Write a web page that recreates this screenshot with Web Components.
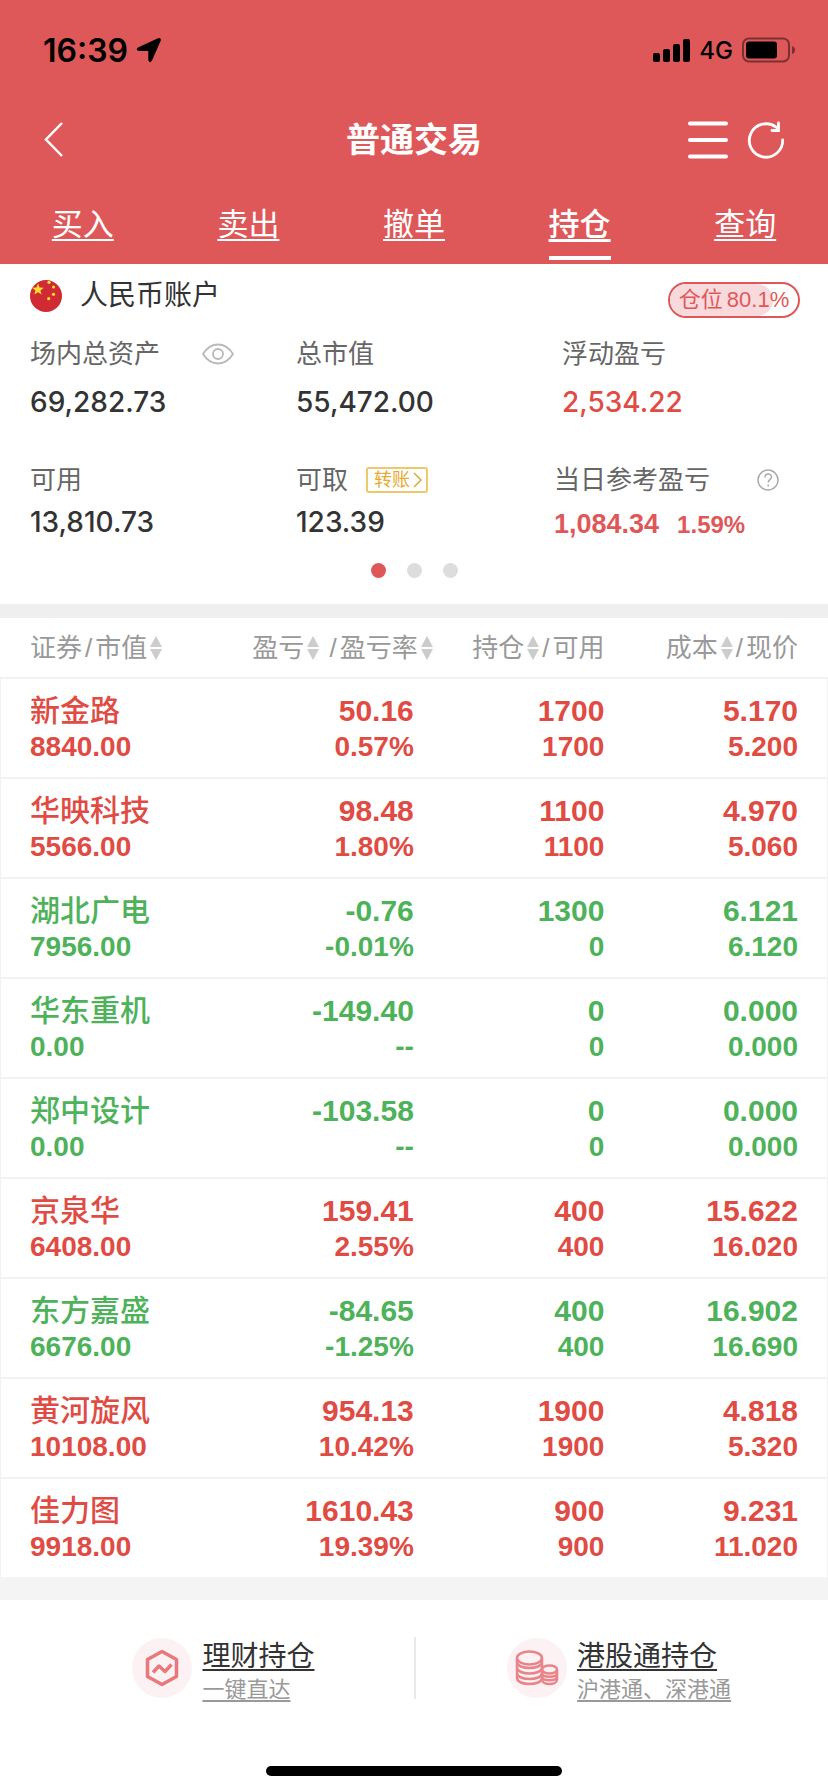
<!DOCTYPE html>
<html lang="zh-CN">
<head>
<meta charset="utf-8">
<meta name="viewport" content="width=device-width, initial-scale=1">
<title>普通交易</title>
<style>
    body {
        margin: 0;
        background: #fff;
        color: #333;
        font-family: "Liberation Sans", "Noto Sans CJK SC", sans-serif;
        --brand: #df5859;
        --up: #e04b43;
        --down: #4eb25a;
        --muted: #999;
    }
</style>
</head>
<body>
    <trade-app></trade-app>

<script>
const define = (name, html, setup) => {
    const template = document.createElement('template')
    template.innerHTML = html
    customElements.define(name, class extends HTMLElement {
        constructor() {
            super()
            this.attachShadow({ mode: 'open' }).appendChild(template.content.cloneNode(true))
        }

        connectedCallback() {
            if (setup) setup(this, this.shadowRoot)
        }
    })
}

define('status-bar', `
    <style>
        :host {
            display: flex;
            justify-content: space-between;
            align-items: center;
            height: 88px;
            padding: 12px 33px 0 43px;
            box-sizing: border-box;
            color: #000;
            font-family: Inter, sans-serif;
        }
        div { display: flex; align-items: center; }
        .time { font-size: 32px; font-weight: 600; gap: 8px; }
        .signal { font-size: 24px; font-weight: 500; gap: 9px; }
        svg { display: block; }
    </style>
    <div class="time">
        <span>16:39</span>
        <svg width="26" height="26" viewBox="0 0 26 26"><path d="M2 10.500 22 1.300Q25.500 .300 24.700 3.800L16 23.500Q13.500 27 12.300 23V14H3Q-1 13 2 10.500Z"/></svg>
    </div>
    <div class="signal">
        <svg width="37" height="24" viewBox="0 0 37 24">
            <rect y="15" width="7" height="9" rx="2"/><rect x="10" y="11" width="7" height="13" rx="2"/>
            <rect x="20" y="6" width="7" height="18" rx="2"/><rect x="30" y="1" width="7" height="23" rx="2"/>
        </svg>
        <span>4G</span>
        <svg width="53" height="26" viewBox="0 0 53 26">
            <rect x="1" y="1.500" width="46" height="23" rx="6" fill="none" stroke="#000" stroke-opacity=".45" stroke-width="2"/>
            <rect x="4" y="4.500" width="31" height="17" rx="3"/>
            <path d="M50 9q3 1 3 4t-3 4z" opacity=".45"/>
        </svg>
    </div>
`)

define('nav-header', `
    <style>
        :host {
            display: grid;
            grid-template-columns: 1fr auto 1fr;
            align-items: center;
            height: 104px;
            padding: 0 42px;
            color: #fff;
        }
        h1 { margin: 0; font-size: 34px; line-height: 48px; font-weight: 700; }
        button { padding: 0; border: 0; background: none; color: inherit; }
        svg { display: block; fill: none; stroke: currentColor; }
        .actions { display: flex; justify-content: flex-end; align-items: center; gap: 18px; }
    </style>
    <button aria-label="返回"><svg width="22" height="36" viewBox="0 0 22 36" stroke-width="2.500"><path d="M20 1 4 17.500 20 34"/></svg></button>
    <h1><slot></slot></h1>
    <div class="actions">
        <button aria-label="菜单"><svg width="40" height="40" viewBox="0 0 40 40" stroke-width="4" stroke-linecap="round"><path d="M2 3.500h36M2 20h36M2 36.500h36"/></svg></button>
        <button aria-label="刷新"><svg width="40" height="40" viewBox="0 0 40 40" stroke-width="2.800" stroke-linecap="round"><path d="M36.700 20A16.700 16.700 0 1 1 30.500 7.500M32.500 3v7.500H26"/></svg></button>
    </div>
`)

define('tab-link', `
    <style>
        :host { flex: 1; display: flex; justify-content: center; }
        a {
            height: 68px;
            box-sizing: border-box;
            border-bottom: 4px solid transparent;
            padding-top: 12px;
            color: #fff;
            font-size: 31px;
            line-height: 42px;
            font-weight: 400;
            text-underline-offset: 4px;
            text-decoration-thickness: 2px;
        }
        :host([active]) a { font-weight: 500; border-color: #fff; text-decoration-thickness: 3px; }
    </style>
    <a href="#"><slot></slot></a>
`)

define('tab-bar', `
    <style>
        :host { display: flex; height: 72px; }
    </style>
    <slot></slot>
`)

define('position-badge', `
    <style>
        :host {
            display: flex;
            justify-content: center;
            gap: 4px;
            width: 128px;
            border: 2px solid var(--brand);
            border-radius: 18px;
            color: var(--brand);
            font-size: 22px;
            line-height: 32px;
            position: relative;
            overflow: hidden;
            z-index: 0;
        }
        .fill {
            position: absolute;
            inset: 0 auto 0 0;
            z-index: -1;
            border-radius: 16px;
            background: #f8dadc;
        }
    </style>
    <div class="fill"></div>
    <span>仓位</span><span class="value"></span>
`, (el, root) => {
    root.querySelector('.value').textContent = el.getAttribute('value')
    root.querySelector('.fill').style.width = el.getAttribute('value')
})

define('asset-item', `
    <style>
        :host { display: block; --value-color: #333; }
        :host([trend=up]) { --value-color: var(--up); }
        .label {
            display: flex;
            align-items: center;
            height: 40px;
            color: #666;
            font-size: 26px;
            line-height: 40px;
        }
        .value {
            margin-top: var(--value-gap, 8px);
            color: var(--value-color);
            font-family: Inter, sans-serif;
            font-size: 28px;
            line-height: 40px;
            font-weight: 500;
        }
    </style>
    <div class="label"><slot name="label"></slot></div>
    <div class="value"><slot></slot></div>
`)

define('account-panel', `
    <style>
        :host { display: block; height: 340px; box-sizing: border-box; padding: 10px 0 0 30px; }
        header { display: flex; align-items: flex-end; justify-content: space-between; padding-right: 28px; height: 44px; }
        .account { display: flex; align-items: center; gap: 18px; height: 44px; }
        h2 { margin: 0; font-size: 28px; line-height: 40px; font-weight: 400; }
        .row { display: grid; grid-template-columns: 266fr 266fr 266fr; margin-top: 16px; }
        .row.second { grid-template-columns: 266fr 258fr 274fr; margin-top: 38px; --value-gap: 2px; }
        svg { display: block; }
        .icon-button { margin-left: 42px; padding: 0; border: 0; background: none; }
        .transfer {
            display: flex;
            align-items: center;
            gap: 2px;
            height: 26px;
            margin-left: 18px;
            padding: 0 3px 0 6px;
            border: 2px solid #efc76f;
            border-radius: 3px;
            background: none;
            color: #e5aa30;
            font: inherit;
            font-size: 18px;
            line-height: 22px;
        }
        .daily {
            display: flex;
            align-items: baseline;
            gap: 18px;
            padding-top: 2px;
            color: var(--brand);
            font-family: "Liberation Sans", sans-serif;
            font-size: 27px;
            font-weight: 700;
        }
        .daily small { font-size: 24px; }
        .dots { display: flex; justify-content: center; gap: 21px; margin: 18px 30px 0 0; }
        .dots i { width: 15px; height: 15px; border-radius: 50%; background: #ddd; }
        .dots i.on { background: var(--brand); }
    </style>
    <header>
        <div class="account">
            <svg width="32" height="32" viewBox="0 0 32 32">
                <circle cx="16" cy="16" r="16" fill="#d02b34"/>
                <g fill="#fbdf2f">
                    <path d="m8 3.500 1.500 4 4.200.200-3.300 2.700 1.200 4.200L8 12.200l-3.700 2.400 1.200-4.200-3.300-2.700 4.300-.200z"/>
                    <circle cx="19" cy="2.300" r="1.600"/><circle cx="23.500" cy="7" r="1.600"/>
                    <circle cx="23.500" cy="14.300" r="1.600"/><circle cx="18.700" cy="18.700" r="1.600"/>
                </g>
            </svg>
            <h2>人民币账户</h2>
        </div>
        <position-badge value="80.1%"></position-badge>
    </header>
    <div class="row">
        <asset-item>
            <span slot="label">场内总资产</span>
            <button slot="label" class="icon-button" aria-label="隐藏金额">
                <svg width="32" height="22" viewBox="0 0 32 22" fill="none" stroke="#b8b8b8" stroke-width="1.800"><path d="M1 11Q7 1.500 16 1.500T31 11Q25 20.500 16 20.500T1 11Z"/><circle cx="16" cy="11" r="5"/></svg>
            </button>
            69,282.73
        </asset-item>
        <asset-item><span slot="label">总市值</span>55,472.00</asset-item>
        <asset-item trend="up"><span slot="label">浮动盈亏</span>2,534.22</asset-item>
    </div>
    <div class="row second">
        <asset-item><span slot="label">可用</span>13,810.73</asset-item>
        <asset-item>
            <span slot="label">可取</span>
            <button slot="label" class="transfer">转账<svg width="11" height="16" viewBox="0 0 11 16" fill="none" stroke="currentColor" stroke-width="1.500"><path d="m2 1 7 7-7 7"/></svg></button>
            123.39
        </asset-item>
        <asset-item>
            <span slot="label">当日参考盈亏</span>
            <button slot="label" class="icon-button" aria-label="说明">
                <svg width="30" height="22" viewBox="0 0 30 22" fill="none" stroke="#aaa" stroke-width="1.500"><circle cx="16" cy="11" r="10"/><path d="M13 8.500c0-4.500 6.500-4.500 6.500-.500 0 2.700-3.300 2.600-3.300 5.500M16.200 15.500v2"/></svg>
            </button>
            <div class="daily">1,084.34 <small>1.59%</small></div>
        </asset-item>
    </div>
    <div class="dots"><i class="on"></i><i></i><i></i></div>
`)

const SORT = `<svg width="12" height="24" viewBox="0 0 12 24" fill="#ccc"><path d="M6 0 12 11H0zM6 24 0 13h12z"/></svg>`

// [name, market value, profit, profit rate, held, available, cost, price]
const HOLDINGS = [
    ['新金路', '8840.00', '50.16', '0.57%', '1700', '1700', '5.170', '5.200'],
    ['华映科技', '5566.00', '98.48', '1.80%', '1100', '1100', '4.970', '5.060'],
    ['湖北广电', '7956.00', '-0.76', '-0.01%', '1300', '0', '6.121', '6.120'],
    ['华东重机', '0.00', '-149.40', '--', '0', '0', '0.000', '0.000'],
    ['郑中设计', '0.00', '-103.58', '--', '0', '0', '0.000', '0.000'],
    ['京泉华', '6408.00', '159.41', '2.55%', '400', '400', '15.622', '16.020'],
    ['东方嘉盛', '6676.00', '-84.65', '-1.25%', '400', '400', '16.902', '16.690'],
    ['黄河旋风', '10108.00', '954.13', '10.42%', '1900', '1900', '4.818', '5.320'],
    ['佳力图', '9918.00', '1610.43', '19.39%', '900', '900', '9.231', '11.020'],
]

define('holdings-table', `
    <style>
        :host { display: block; border-top: 14px solid #efefef; border-bottom: 23px solid #f4f4f4; }
        table { width: 100%; table-layout: fixed; border-collapse: separate; border-spacing: 0; }
        th, td { padding: 0; text-align: right; white-space: nowrap; }
        th { height: 59px; color: var(--muted); font-size: 26px; font-weight: 400; }
        th > div { display: flex; justify-content: flex-end; align-items: center; gap: 3px; line-height: 40px; }
        th button {
            display: flex;
            align-items: center;
            gap: 3px;
            padding: 0;
            border: 0;
            background: none;
            color: inherit;
            font: inherit;
            line-height: 40px;
        }
        th:nth-child(1), td:nth-child(1) { width: 26%; padding-left: 30px; box-sizing: border-box; text-align: left; }
        th:nth-child(1) > div { justify-content: flex-start; }
        th:nth-child(2), td:nth-child(2) { width: 27%; padding-right: 25px; box-sizing: border-box; }
        th:nth-child(2) { padding-right: 6px; }
        th:nth-child(3) { width: 20%; }
        th:nth-child(4), td:nth-child(4) { width: 27%; padding-right: 30px; box-sizing: border-box; }
        svg { display: block; flex: none; }
        td {
            height: 98px;
            border-top: 2px solid #f2f2f2;
            font-size: 28px;
            line-height: 34px;
            font-weight: 700;
            vertical-align: top;
        }
        td div:first-child { margin-top: 13px; font-size: 30px; line-height: 38px; }
        td:first-child div:first-child { font-weight: 500; }
        td:first-child { box-shadow: inset 1px 0 #f2f2f2; }
        td:last-child { box-shadow: inset -1px 0 #f2f2f2; }
        .up { color: var(--up); }
        .down { color: var(--down); }
    </style>
    <table>
        <thead>
            <tr>
                <th><div><span>证券</span><span>/</span><button>市值${SORT}</button></div></th>
                <th><div><button>盈亏${SORT}</button><span>&nbsp;/</span><button>盈亏率${SORT}</button></div></th>
                <th><div><button>持仓${SORT}</button><span>/</span><span>可用</span></div></th>
                <th><div><button>成本${SORT}</button><span>/</span><span>现价</span></div></th>
            </tr>
        </thead>
        <tbody></tbody>
    </table>
`, (el, root) => {
    root.querySelector('tbody').innerHTML = HOLDINGS.map(row => {
        const trend = row[2].startsWith('-') ? 'down' : 'up'
        const cells = [0, 2, 4, 6].map(i => `<td><div>${row[i]}</div><div>${row[i + 1]}</div></td>`)
        return `<tr class="${trend}">${cells.join('')}</tr>`
    }).join('')
})

define('quick-link', `
    <style>
        :host { display: block; }
        a { display: flex; align-items: center; gap: 10px; height: 62px; color: #333; text-decoration: none; }
        .icon { width: 60px; height: 60px; border-radius: 50%; background: #fdf2f3; }
        .text { padding-top: 8px; }
        .title, .note { display: block; text-decoration: underline 2px; text-underline-offset: 3px; }
        .title { font-size: 28px; line-height: 36px; }
        .note { color: var(--muted); font-size: 22px; line-height: 30px; }
    </style>
    <a href="#">
        <span class="icon"><slot name="icon"></slot></span>
        <span class="text"><span class="title"><slot></slot></span><span class="note"><slot name="note"></slot></span></span>
    </a>
`)

define('quick-links', `
    <style>
        :host { display: grid; grid-template-columns: 1fr 1fr; padding-top: 37px; }
        ::slotted(:first-child) { padding-left: 32%; }
        ::slotted(:last-child) { padding-left: 22%; border-left: 2px solid #eaeaea; }
    </style>
    <slot></slot>
`)

define('trade-app', `
    <style>
        :host { display: block; }
        .top { background: var(--brand); }
        .home { width: 296px; height: 10px; margin: 67px auto 16px; border-radius: 5px; background: #000; }
        svg { display: block; }
    </style>
    <div class="top">
        <status-bar></status-bar>
        <nav-header>普通交易</nav-header>
        <tab-bar>
            <tab-link>买入</tab-link>
            <tab-link>卖出</tab-link>
            <tab-link>撤单</tab-link>
            <tab-link active>持仓</tab-link>
            <tab-link>查询</tab-link>
        </tab-bar>
    </div>
    <account-panel></account-panel>
    <holdings-table></holdings-table>
    <quick-links>
        <quick-link>
            <svg slot="icon" width="60" height="60" viewBox="0 0 60 60" fill="none" stroke="#e9787d" stroke-width="3.500" stroke-linejoin="round">
                <path d="m30 13.500 14.500 8v17L30 46.500l-14.500-8v-17z"/><path d="m21 34.500 6-6.500 6 5.500 6.500-7"/>
            </svg>
            理财持仓<span slot="note">一键直达</span>
        </quick-link>
        <quick-link>
            <svg slot="icon" width="60" height="60" viewBox="0 0 60 60" fill="none" stroke="#e9858a" stroke-width="2.500">
                <ellipse cx="22.500" cy="20" rx="12.500" ry="6.500"/>
                <path d="M10 20v20c0 8 25 8 25 0V20M10 24c0 8 25 8 25 0M10 29.500c0 8 25 8 25 0M10 35c0 8 25 8 25 0"/>
                <ellipse cx="42.500" cy="31.500" rx="7.500" ry="4"/>
                <path d="M35 31.500v10c0 6 15 6 15 0v-10M35 35c0 5 15 5 15 0M35 38.500c0 5 15 5 15 0"/>
            </svg>
            港股通持仓<span slot="note">沪港通、深港通</span>
        </quick-link>
    </quick-links>
    <div class="home"></div>
`)
</script>
</body>
</html>
